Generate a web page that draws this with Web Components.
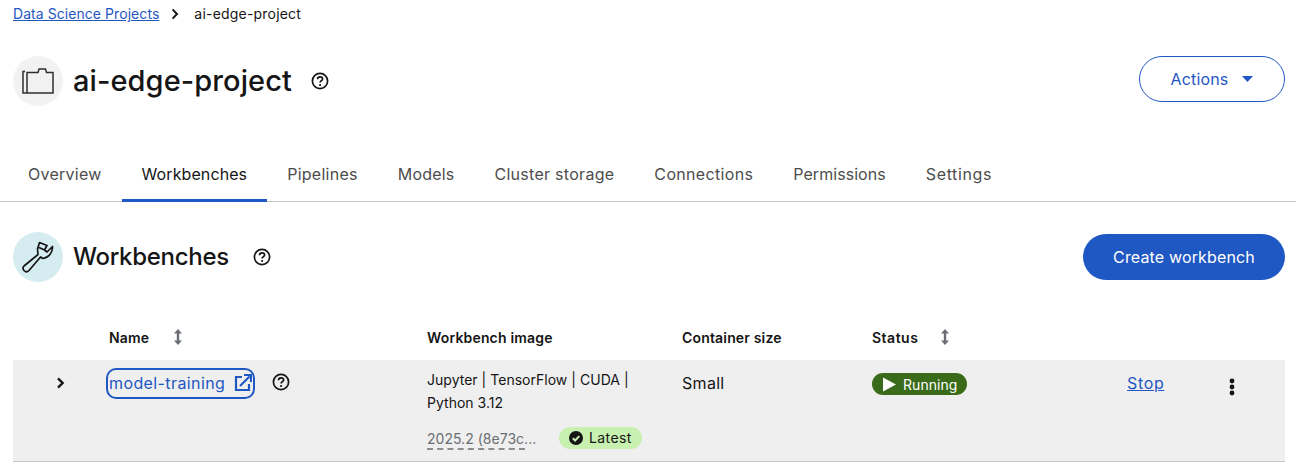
<!DOCTYPE html>
<html lang="en"><head><meta charset="utf-8"><title>ai-edge-project</title>
<style>
html,body{margin:0;padding:0;background:#fff;font-family:"Inter","Noto Sans",sans-serif;color:#151515;font-size:16px}
</style></head><body>
<project-page></project-page>
<script>
const HELP=(s)=>`<svg width="${s}" height="${s}" viewBox="0 0 18 18" aria-hidden="true"><circle cx="9" cy="9" r="7.6" fill="none" stroke="#151515" stroke-width="1.7"/><path d="M6.5 7.2c0-1.5 1.1-2.4 2.6-2.4s2.5.9 2.5 2.1c0 1.9-2.5 1.9-2.5 3.6" fill="none" stroke="#151515" stroke-width="1.7"/><circle cx="9.1" cy="13" r="1.1" fill="#151515"/></svg>`;
const SORT=`<svg width="10" height="16" viewBox="0 0 10 16" aria-hidden="true"><path d="M5 0 9 4.6H6.2v6.8H9L5 16 1 11.4h2.8V4.6H1z" fill="#6a6e73"/></svg>`;
function def(name,css,html){customElements.define(name,class extends HTMLElement{constructor(){super();this.attachShadow({mode:"open"}).innerHTML=`<style>${css}</style>${typeof html==="function"?html():html}`}})}

def("bread-crumb",`:host{display:flex;align-items:center;height:27px;font-size:14px;letter-spacing:.06px}
a{color:#1f57c3;text-decoration:underline}
svg{margin:0 15px 0 12px}
span{color:#151515;letter-spacing:.2px}`,
`<a href="#">Data Science Projects</a><svg width="8" height="12" viewBox="0 0 8 12"><path d="M1.6 1.4 6 6l-4.4 4.6" fill="none" stroke="#151515" stroke-width="2"/></svg><span>ai-edge-project</span>`);

def("icon-disc",`:host{display:flex;width:50px;height:50px;border-radius:50%;align-items:center;justify-content:center;flex:none;background:var(--disc,#f2f2f2)}`,`<slot></slot>`);

def("action-button",`:host{display:inline-flex;align-items:center;justify-content:center;box-sizing:border-box;height:46px;border-radius:23px;font-size:16px;letter-spacing:.15px}
:host([variant=secondary]){width:146px;border:1px solid #1f57c3;color:#1f57c3;background:#fff;gap:14px}
:host([variant=primary]){width:202px;background:#1f57c3;color:#fff}`,`<slot></slot>`);

def("page-header",`:host{display:flex;align-items:flex-start;height:90px;padding-top:29px}
.t{font-size:29px;font-weight:500;line-height:50px;margin-left:10px;letter-spacing:.09px}
.h{margin-left:19px;height:50px;display:flex;align-items:center}
.s{flex:1}`,
`<icon-disc><svg width="32" height="26" viewBox="0 0 32 26"><path d="M3 3.500H1V25H31V4.500H24.500L23.500 1H17L16 4.500H5V25" fill="none" stroke="#2f2f2f" stroke-width="1.500"/></svg></icon-disc><div class="t">ai-edge-project</div><div class="h">${HELP(18)}</div><div class="s"></div><action-button variant="secondary">Actions<svg width="11" height="6" viewBox="0 0 11 6"><path d="M0 0h11L5.500 6z" fill="#1f57c3"/></svg></action-button>`);

def("tab-bar",`:host{display:flex;height:56px;padding-left:8px;margin-left:-13px;margin-right:-11px;border-bottom:1px solid #c7c7c7;box-sizing:border-box;font-size:16px;letter-spacing:.18px}
div{padding:0 20px;display:flex;align-items:center;color:#4d4d4d;box-sizing:border-box;height:56px}
.a{color:#151515;border-bottom:3px solid #1f57c3;padding-top:3px}`,
`<div style="letter-spacing:.25px">Overview</div><div class="a" style="letter-spacing:.1px">Workbenches</div><div style="letter-spacing:.26px">Pipelines</div><div style="letter-spacing:.21px">Models</div><div style="letter-spacing:.28px">Cluster storage</div><div style="letter-spacing:.33px">Connections</div><div style="letter-spacing:.06px">Permissions</div><div style="letter-spacing:.63px">Settings</div>`);

def("section-head",`:host{display:flex;align-items:center;height:50px;margin-top:30px;--disc:#d5edf0}
.t{font-size:24px;font-weight:500;margin-left:10px;letter-spacing:-.3px;margin-top:-2px}
.h{margin-left:24px;display:flex}.s{flex:1}`,
`<icon-disc><svg width="32" height="32" viewBox="0 0 32 32"><path d="M2 25 16 13.500 15.500 8 17.500 1.500 25 4.500 22.500 9 25 11 30.500 5.500C30.800 11 27 16.500 21 17.500L18.500 16 7 29.500C5.500 31 3.500 31 2 29.500 .8 28 .8 26.200 2 25ZM17 6.500 22.500 9" fill="none" stroke="#151515" stroke-width="1.700" stroke-linejoin="round"/></svg></icon-disc><div class="t">Workbenches</div><div class="h">${HELP(18)}</div><div class="s"></div><action-button variant="primary">Create workbench</action-button>`);

def("status-pill",`:host{display:inline-flex;align-items:center;height:22px;border-radius:11px;padding:0 10px 0 11px;gap:7px;background:#3a6b1a;color:#fff;font-size:14px;letter-spacing:.05px}`,
`<svg width="13" height="15" viewBox="0 0 13 15"><path d="M0 .5v14L13 7.500z" fill="#fff"/></svg><slot></slot>`);

def("latest-pill",`:host{display:inline-flex;align-items:center;height:22px;border-radius:11px;padding:0 10px;gap:6px;background:#c8f0b0;color:#151515;font-size:14px;letter-spacing:.4px}`,
`<svg width="14" height="14" viewBox="0 0 14 14"><circle cx="7" cy="7" r="7" fill="#151515"/><path d="M3.800 7.200 6.100 9.500 10.300 5.100" fill="none" stroke="#c8f0b0" stroke-width="2"/></svg><slot></slot>`);

def("workbench-table",`:host{display:grid;grid-template-columns:96px 318px 255px 190px 255px 1fr;margin-top:40px}
.th{height:38px;box-sizing:border-box;padding-bottom:8px;display:flex;align-items:center;gap:24px;font-size:14px;font-weight:600;letter-spacing:.17px}
.r{background:#efefef;height:102px;box-sizing:border-box;border-bottom:1px solid #c7c7c7;font-size:16px}
.exp{display:flex;align-items:flex-start;padding:17px 0 0 43px}
.nm{display:flex;align-items:flex-start;padding-top:8px;margin-left:-3px}
.lnk{display:flex;align-items:center;gap:9px;height:31px;box-sizing:border-box;border:2px solid #1f57c3;border-radius:10px;padding:0 0 2px 1px;width:149px;color:#1f57c3;font-size:16px;letter-spacing:.4px}
.nm>svg{margin:5px 0 0 17px}
.im{padding-top:9px;font-size:14px;line-height:22.500px;letter-spacing:.02px}
.ver{display:flex;align-items:center;margin-top:13px;height:22px;color:#6a6e73}
.ver span{display:block;width:98px;white-space:nowrap;border-bottom:2px dashed #8a8d90;line-height:19px;margin-top:2px}
.ver latest-pill{margin-left:34px}
.sz{padding-top:13px;letter-spacing:.3px}
.st{display:flex;align-items:flex-start;padding-top:13px}
.ac{display:flex;padding-top:13px}
.ac a{color:#1f57c3;text-decoration:underline;letter-spacing:.65px}
.ac svg{margin:5px 0 0 65px}`,
`<div class="th"></div><div class="th">Name ${SORT}</div><div class="th">Workbench image</div><div class="th">Container size</div><div class="th" style="gap:22px"><span style="letter-spacing:.5px">Status</span> ${SORT}</div><div class="th"></div>
<div class="r exp"><svg width="9" height="12" viewBox="0 0 9 12"><path d="M2 1.400 6.600 6 2 10.600" fill="none" stroke="#151515" stroke-width="2.400"/></svg></div>
<div class="r nm"><div class="lnk">model-training<svg width="18" height="18" viewBox="0 0 18 18"><path d="M8 3H2v13h13v-6" fill="none" stroke="#1f57c3" stroke-width="2.200"/><path d="M6 12 15.500 2.500M10 1h7v7" fill="none" stroke="#1f57c3" stroke-width="2.200"/></svg></div>${HELP(18)}</div>
<div class="r im">Jupyter | TensorFlow | CUDA |<br>Python 3.12<div class="ver"><span>2025.2 (8e73c...</span><latest-pill>Latest</latest-pill></div></div>
<div class="r sz">Small</div>
<div class="r st"><status-pill>Running</status-pill></div>
<div class="r ac"><a href="#">Stop</a><svg width="6" height="18" viewBox="0 0 6 18"><circle cx="3" cy="3" r="2.400" fill="#151515"/><circle cx="3" cy="9" r="2.400" fill="#151515"/><circle cx="3" cy="15" r="2.400" fill="#151515"/></svg></div>`);

def("project-page",`:host{display:block;padding:0 11px 0 13px}`,
`<bread-crumb></bread-crumb><page-header></page-header><tab-bar></tab-bar><section-head></section-head><workbench-table></workbench-table>`);
</script>
</body></html>
